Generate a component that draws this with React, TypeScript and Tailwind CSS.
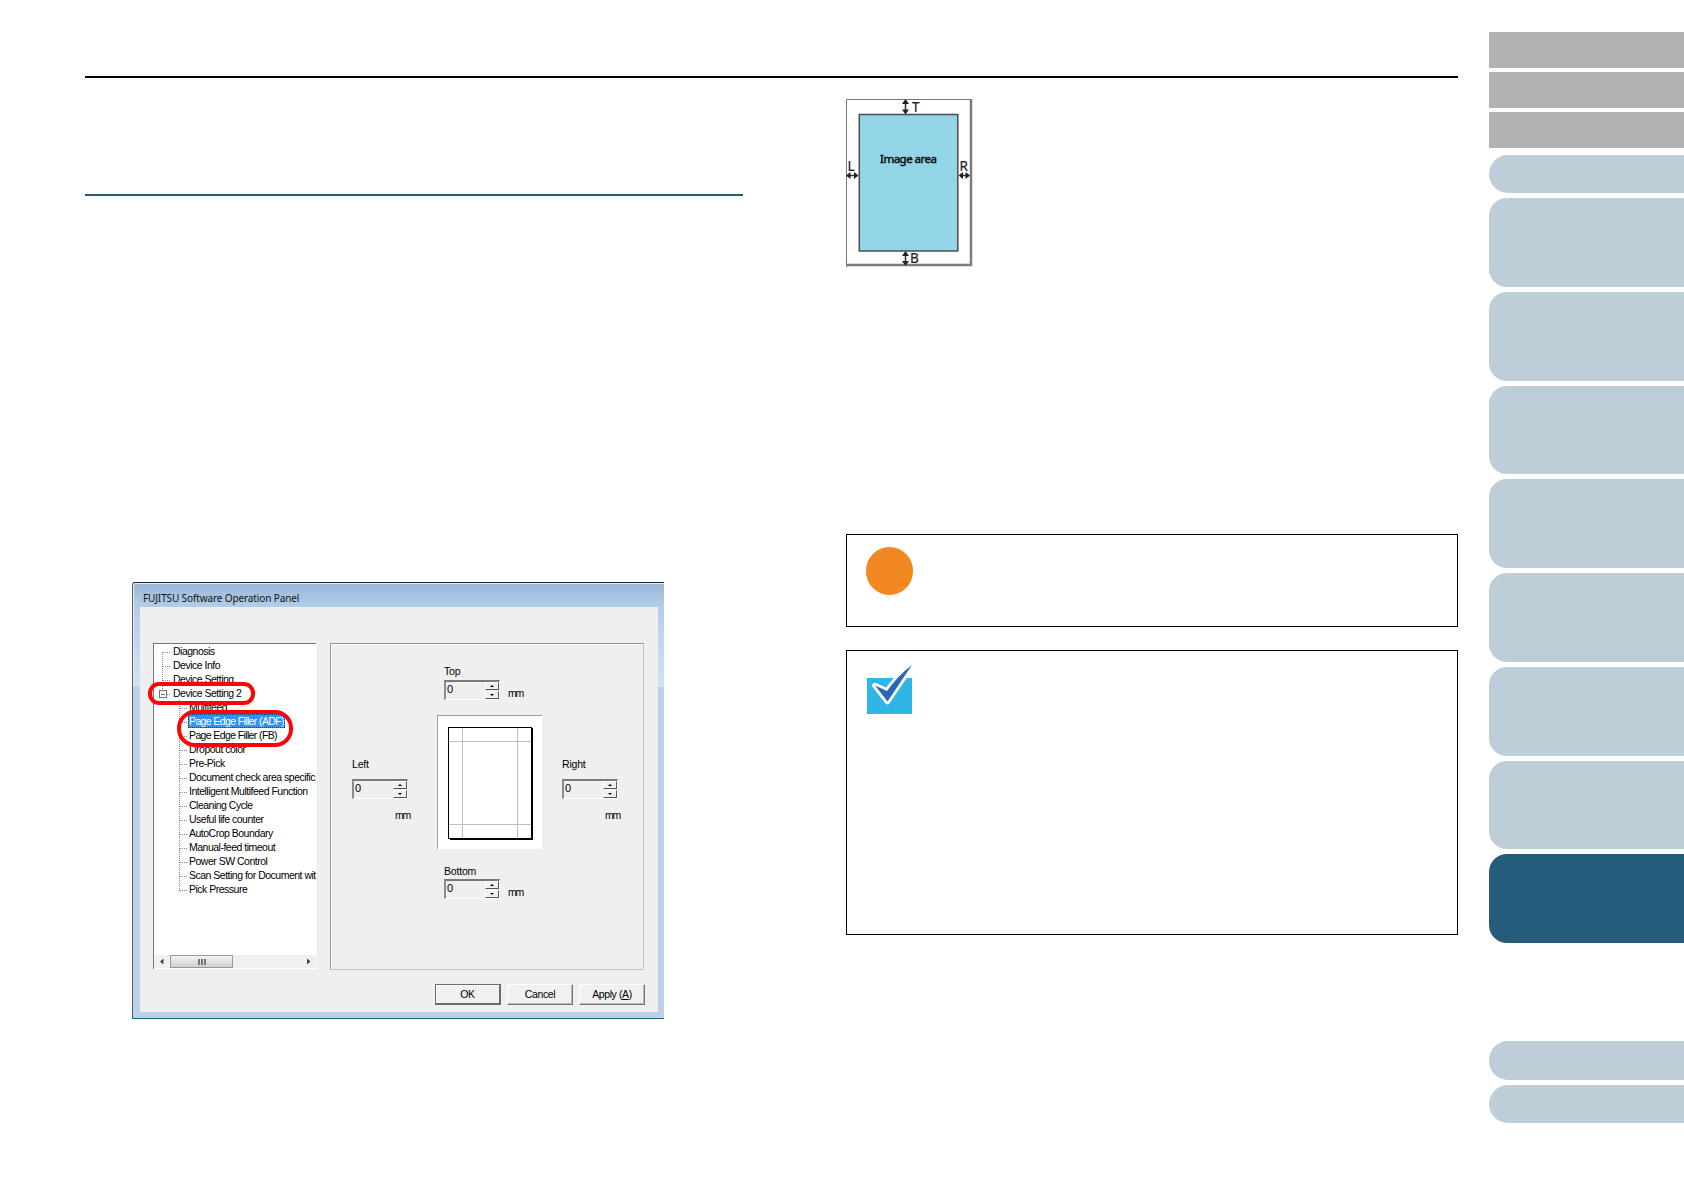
import React from 'react';
import clsx from 'clsx';

interface TreeItem {
  label: string;
  level: 1 | 2;
  selected?: boolean;
}

const treeItems: TreeItem[] = [
  { label: 'Diagnosis', level: 1 },
  { label: 'Device Info', level: 1 },
  { label: 'Device Setting', level: 1 },
  { label: 'Device Setting 2', level: 1 },
  { label: 'Multifeed', level: 2 },
  { label: 'Page Edge Filler (ADF)', level: 2, selected: true },
  { label: 'Page Edge Filler (FB)', level: 2 },
  { label: 'Dropout color', level: 2 },
  { label: 'Pre-Pick', level: 2 },
  { label: 'Document check area specific', level: 2 },
  { label: 'Intelligent Multifeed Function', level: 2 },
  { label: 'Cleaning Cycle', level: 2 },
  { label: 'Useful life counter', level: 2 },
  { label: 'AutoCrop Boundary', level: 2 },
  { label: 'Manual-feed timeout', level: 2 },
  { label: 'Power SW Control', level: 2 },
  { label: 'Scan Setting for Document wit', level: 2 },
  { label: 'Pick Pressure', level: 2 },
];

const chapters = [1, 2, 3, 4, 5, 6, 7, 8];

const SideNav: React.FC = () => (
  <nav className="ml-[31px] flex w-[195px] flex-col pt-8">
    <div className="flex flex-col gap-1">
      <div className="h-9 bg-[#b2b2b2]" />
      <div className="h-9 bg-[#b2b2b2]" />
      <div className="h-9 bg-[#b2b2b2]" />
    </div>
    <div className="mt-[7px] h-[38px] rounded-l-[19px] bg-[#bdced8]" />
    <div className="mt-[5.4px] flex flex-col gap-[5px]">
      {chapters.map((chapter) => (
        <div
          key={chapter}
          className={clsx('h-[88.7px] rounded-l-[18px]', chapter === 8 ? 'bg-[#265c7b]' : 'bg-[#bdced8]')}
        />
      ))}
    </div>
    <div className="mt-[98.4px] h-[38.6px] rounded-l-[19px] bg-[#bdced8]" />
    <div className="mt-[5px] h-[38px] rounded-l-[19px] bg-[#bdced8]" />
  </nav>
);

const SettingsTree: React.FC = () => (
  <div className="flex h-[326px] w-[163px] flex-col border-t border-l border-[#777] bg-white shadow-[1px_0_0_#f8f8f8]">
    <div className="relative h-[311px] overflow-hidden">
      <svg className="absolute top-0 left-0" width="40" height="270" shapeRendering="crispEdges">
        <g stroke="#8a8a8a" strokeDasharray="1 1">
          <path d="M8.5 8V46M25.5 56V247" />
          {treeItems.map((item, i) => (
            <path
              key={item.label}
              d={item.level === 1 ? `M9 ${8.5 + i * 14}h7` : `M26 ${8.5 + i * 14}h7`}
            />
          ))}
        </g>
        <path d="M5.5 46.5h7v7h-7zM7 50.5h4" fill="#fff" stroke="#777" />
      </svg>
      {treeItems.map((item) => (
        <div key={item.label} className={clsx('flex h-[14px] items-center', item.level === 1 ? 'pl-[18px]' : 'pl-[34px]')}>
          <span
            className={clsx(
              'px-[1px] text-[10.5px] leading-[14px] whitespace-nowrap',
              item.label.startsWith('Page Edge') ? 'tracking-[-0.62px]' : 'tracking-[-0.5px]',
              item.selected ? 'w-[97px] bg-[#3393f5] text-white outline-1 -outline-offset-1 outline-dotted outline-[#1c3c66]' : 'text-black',
            )}
          >
            {item.label}
          </span>
        </div>
      ))}
    </div>
    <div className="flex h-[13px] items-center bg-[#f0f0f0]">
      <svg width="16" height="13">
        <path d="M9.5 3.5v6L6 6.5z" fill="#444" />
      </svg>
      <div className="flex h-[13px] w-[63px] items-center justify-center gap-[1px] border border-[#999] bg-linear-to-b from-[#f3f3f3] to-[#cfcfcf]">
        <span className="h-[6px] w-[2px] bg-[#777]" />
        <span className="h-[6px] w-[2px] bg-[#777]" />
        <span className="h-[6px] w-[2px] bg-[#777]" />
      </div>
      <svg className="ml-auto" width="16" height="13">
        <path d="M7 3.5v6L10.5 6.5z" fill="#444" />
      </svg>
    </div>
  </div>
);

const Spinner: React.FC = () => (
  <div className="flex h-5 w-14 border border-t-2 border-l-2 border-t-[#7a7a7a] border-r-[#fff] border-b-[#fff] border-l-[#8c8c8c] bg-[#efefef]">
    <span className="flex-1 pl-[1px] text-[11px] leading-[15px]">0</span>
    <div className="flex w-[14px] flex-col gap-[1px]">
      <div className="flex h-2 items-center justify-center border border-t-white border-r-[#555] border-b-[#555] border-l-white">
        <svg width="4" height="2"><path d="M0 2L2 0L4 2z" /></svg>
      </div>
      <div className="flex h-2 items-center justify-center border border-t-white border-r-[#555] border-b-[#555] border-l-white">
        <svg width="4" height="2"><path d="M0 0L2 2L4 0z" /></svg>
      </div>
    </div>
  </div>
);

const Unit: React.FC = () => <span className="text-[10.5px] leading-[14px] tracking-[-1.2px]">mm</span>;

const PagePreview: React.FC = () => (
  <svg className="block" width="105" height="134" shapeRendering="crispEdges">
    <rect width="105" height="134" fill="#fff" />
    <path d="M0.5 134V0.5H105" fill="none" stroke="#a0a0a0" />
    <path d="M13 123V125H96V13H94V123z" fill="#000" />
    <rect x="11.5" y="12.5" width="83" height="111" fill="#fff" stroke="#000" />
    <path d="M25.5 13V123M80.5 13V123M12 26.5H94M12 109.5H94" stroke="#bdbdbd" />
  </svg>
);

const SidePanelField: React.FC<{ label: string }> = ({ label }) => (
  <div className="mt-[42px] flex w-[58px] flex-col">
    <span className="text-[10.5px] leading-[14px] tracking-[-0.2px]">{label}</span>
    <div className="mt-[8px]">
      <Spinner />
    </div>
    <div className="mt-[9px] flex justify-end">
      <Unit />
    </div>
  </div>
);

const MarginPanel: React.FC = () => (
  <div className="h-[327px] w-[314px] border border-t-[#969696] border-r-[#c4c4c4] border-b-[#c4c4c4] border-l-[#969696] pt-[20px] pl-[21px] shadow-[inset_1px_1px_0_#fafafa]">
    <div className="pl-[92px]">
      <div className="text-[10.5px] leading-[14px] tracking-[-0.2px]">Top</div>
      <div className="mt-[2px] flex gap-[8px]">
        <Spinner />
        <span className="mt-[6px] flex"><Unit /></span>
      </div>
    </div>
    <div className="mt-[15px] flex h-[134px]">
      <SidePanelField label="Left" />
      <div className="mr-[20px] ml-[27px]">
        <PagePreview />
      </div>
      <SidePanelField label="Right" />
    </div>
    <div className="mt-[15px] pl-[92px]">
      <div className="text-[10.5px] leading-[14px] tracking-[-0.2px]">Bottom</div>
      <div className="mt-[1px] flex gap-[8px]">
        <Spinner />
        <span className="mt-[6px] flex"><Unit /></span>
      </div>
    </div>
  </div>
);

const DialogButton: React.FC<{ primary?: boolean; children: React.ReactNode }> = ({ primary, children }) => (
  <button
    className={clsx(
      'h-[21px] w-[66px] bg-[#f0f0f0] text-[10.5px] leading-[17px] tracking-[-0.4px]',
      primary
        ? 'border border-r-2 border-b-2 border-[#6b6b6b] shadow-[inset_1px_1px_0_#fff]'
        : 'border border-t-white border-r-[#777] border-b-[#777] border-l-white shadow-[inset_-1px_-1px_0_#b8b8b8]',
    )}
  >
    {children}
  </button>
);

const OperationPanel: React.FC = () => (
  <div className="relative h-[437px] w-[532px] rounded-tl-[3px] border-t border-b border-l border-t-[#1d2832] border-b-[#1f6470] border-l-[#5c5c5c] bg-linear-to-b from-[#9cb8d7] via-[#b5cfe9] via-6% to-[#cee4f6] to-24% font-['Liberation_Sans',Arial,sans-serif] text-black shadow-[inset_1px_1px_0_#e3edf7]">
    <div className="h-[24px] pt-[7px] pl-[10px] font-['Noto_Sans','Open_Sans',sans-serif] text-[10px] leading-[16px] tracking-[-0.12px] text-[#111]">
      FUJITSU Software Operation Panel
    </div>
    {/* The glass highlight on the side frame stops abruptly, the rest is flat */}
    <div className="flex h-[411px] flex-col bg-linear-to-b from-transparent from-[80px] to-[#bbd1ea] to-[80px] pl-[7px]">
      <div className="h-[405px] w-[518px] bg-[#efefef] pt-[36px]">
        <div className="flex gap-[14px] pl-[13px]">
          <SettingsTree />
          <MarginPanel />
        </div>
        <div className="mt-[14px] flex justify-end gap-[6px] pr-[13px]">
          <DialogButton primary>OK</DialogButton>
          <DialogButton>Cancel</DialogButton>
          <DialogButton>
            Apply (<span className="underline">A</span>)
          </DialogButton>
        </div>
      </div>
    </div>
    {/* Highlight rings over the tree */}
    <div className="absolute top-[99px] left-[15px] h-[23px] w-[107px] rounded-[11px] border-4 border-[#fa0505]" />
    <div className="absolute top-[127px] left-[44px] h-[37px] w-[116px] rounded-[18px] border-4 border-[#fa0505]" />
  </div>
);

const ImageAreaDiagram: React.FC = () => (
  <svg className="block font-['Noto_Sans','Open_Sans',sans-serif]" width="127" height="168">
    <path d="M0.5 168V0.5H125" fill="none" stroke="#777" />
    <path d="M125 0V166H0" fill="none" stroke="#7c7c7c" strokeWidth="2.500" />
    <rect x="13.300" y="15.500" width="98.500" height="136.500" fill="#92d5e7" stroke="#4c4c4c" strokeWidth="1.500" />
    <g fill="#222" stroke="#333" strokeWidth="1.500">
      <path d="M59.500 2V13M59.500 154V165M2 76.500H11M114 76.500H123" />
      <path
        stroke="none"
        d="M56 5L59.500 0L63 5zM56 10.500L59.500 15.500L63 10.500zM56 157L59.500 152L63 157zM56 162L59.500 167L63 162zM4.500 73L0 76.500L4.500 80zM8 73L12.500 76.500L8 80zM117 73L112.500 76.500L117 80zM119.500 73L124 76.500L119.500 80z"
      />
    </g>
    <g fill="#222" stroke="#222" strokeWidth="0.200" fontSize="13.500">
      <text x="66" y="13">T</text>
      <text x="64" y="164">B</text>
      <text x="1.500" y="72">L</text>
      <text x="113.500" y="72">R</text>
    </g>
    <text x="34" y="64" fontSize="11.500" textLength="57" fill="#111" stroke="#111" strokeWidth="0.500">Image area</text>
  </svg>
);

const CheckIcon: React.FC = () => (
  <svg className="block" width="46" height="50" viewBox="0 0 46 50">
    <rect x="0" y="13" width="45" height="36" fill="#30b6e6" />
    <path d="M8 20.5L20 26Q31 10.5 45 0L20.5 36.5z" fill="#fff" stroke="#fff" strokeWidth="5.500" strokeLinejoin="round" />
    <path d="M8 20.5L20 26Q31 10.5 45 0L20.5 36.5z" fill="#2769b8" />
  </svg>
);

const App: React.FC = () => {
  return (
    <div className="flex h-[1190px] w-[1684px] overflow-hidden bg-white">
      <main className="ml-[85px] w-[1373px] pt-[76px]">
        <div className="h-[2px] bg-black" />
        <div className="flex justify-between">
          <section className="w-[658px] pt-[116px]">
            <div className="h-[2px] bg-[#265c7b]" />
            <div className="mt-[386px] ml-[47px]">
              <OperationPanel />
            </div>
          </section>
          <section className="w-[612px] pt-[21px]">
            <ImageAreaDiagram />
            <div className="mt-[267px] h-[93px] border border-black pt-3 pl-[18.5px]">
              <div className="size-[47.5px] rounded-full bg-[#f18821]" />
            </div>
            <div className="mt-[23px] h-[285px] border border-black pt-[14px] pl-5">
              <CheckIcon />
            </div>
          </section>
        </div>
      </main>
      <SideNav />
    </div>
  );
};

export default App;
